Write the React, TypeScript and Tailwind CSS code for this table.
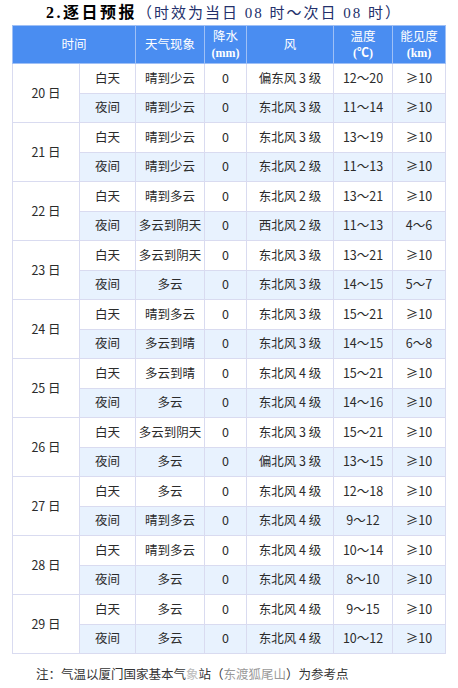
import React from "react";

type Half = { label: string; weather: string; rain: string; wind: string; temp: string; vis: string };
type Day = { day: string; rows: [Half, Half] };

const h = (label: string, weather: string, wind: string, temp: string, vis = "≥10"): Half => ({
  label,
  weather,
  rain: "0",
  wind,
  temp,
  vis,
});

const days: Day[] = [
  { day: "20 日", rows: [h("白天", "晴到少云", "偏东风 3 级", "12～20"), h("夜间", "晴到少云", "东北风 3 级", "11～14")] },
  { day: "21 日", rows: [h("白天", "晴到少云", "东北风 3 级", "13～19"), h("夜间", "晴到少云", "东北风 2 级", "11～13")] },
  { day: "22 日", rows: [h("白天", "晴到多云", "东北风 2 级", "13～21"), h("夜间", "多云到阴天", "西北风 2 级", "11～13", "4～6")] },
  { day: "23 日", rows: [h("白天", "多云到阴天", "东北风 3 级", "13～21"), h("夜间", "多云", "东北风 3 级", "14～15", "5～7")] },
  { day: "24 日", rows: [h("白天", "晴到多云", "东北风 3 级", "15～21"), h("夜间", "多云到晴", "东北风 3 级", "14～15", "6～8")] },
  { day: "25 日", rows: [h("白天", "多云到晴", "东北风 4 级", "15～21"), h("夜间", "多云", "东北风 4 级", "14～16")] },
  { day: "26 日", rows: [h("白天", "多云到阴天", "东北风 3 级", "15～21"), h("夜间", "多云", "偏北风 3 级", "13～15")] },
  { day: "27 日", rows: [h("白天", "多云", "东北风 4 级", "12～18"), h("夜间", "晴到多云", "东北风 4 级", "9～12")] },
  { day: "28 日", rows: [h("白天", "晴到多云", "东北风 4 级", "10～14"), h("夜间", "多云", "东北风 4 级", "8～10")] },
  { day: "29 日", rows: [h("白天", "多云", "东北风 4 级", "9～15"), h("夜间", "多云", "东北风 4 级", "10～12")] },
];

const sans = "font-['Noto_Sans_CJK_SC',sans-serif]";
const serif = "font-['Liberation_Serif','Noto_Sans_CJK_SC',serif]";

export default function App() {
  return (
    <div className={`w-[458px] h-[688px] bg-white ${sans} text-[#2b2b2b]`}>
      {/* Title */}
      <div className="h-[25px] flex items-center pl-[46px] pt-[1px]">
        <span className={`${serif} text-[16px] font-bold text-black leading-none tracking-[2.5px]`}>2.逐日预报</span>
        <span className={`${serif} text-[15px] text-[#23306b] leading-none tracking-[2px]`}>
          （时效为当日 08 时～次日 08 时）
        </span>
      </div>

      {/* Table */}
      <div className="pl-[12px]">
        <table className="border-collapse table-fixed w-[433px] text-[12.5px] text-center">
          <colgroup>
            <col className="w-[67px]" />
            <col className="w-[56px]" />
            <col className="w-[69px]" />
            <col className="w-[42px]" />
            <col className="w-[87px]" />
            <col className="w-[59px]" />
            <col className="w-[53px]" />
          </colgroup>
          <thead>
            <tr className="h-[38px] bg-[#4a8df1] text-white">
              <th colSpan={2} className="font-normal border border-[#9fc0f6]">时间</th>
              <th className="font-normal border border-[#9fc0f6]">天气现象</th>
              <th className="font-normal border border-[#9fc0f6] leading-[16px]">
                降水
                <br />
                <span className={`${serif} font-bold text-[12px]`}>(mm)</span>
              </th>
              <th className="font-normal border border-[#9fc0f6]">风</th>
              <th className="font-normal border border-[#9fc0f6] leading-[16px]">
                温度
                <br />
                <span className={`${serif} font-bold text-[12px]`}>(℃)</span>
              </th>
              <th className="font-normal border border-[#9fc0f6] leading-[16px]">
                能见度
                <br />
                <span className={`${serif} font-bold text-[12px]`}>(km)</span>
              </th>
            </tr>
          </thead>
          <tbody>
            {days.map((d) =>
              d.rows.map((r, i) => (
                <tr key={d.day + i} className={i === 1 ? "h-[29.5px] bg-[#e8f2fe]" : "h-[29.5px] bg-white"}>
                  {i === 0 && (
                    <td rowSpan={2} className="bg-white border border-[#d9dbf0]">
                      {d.day}
                    </td>
                  )}
                  <td className="border border-[#d9dbf0]">{r.label}</td>
                  <td className="border border-[#d9dbf0]">{r.weather}</td>
                  <td className="border border-[#d9dbf0]">{r.rain}</td>
                  <td className="border border-[#d9dbf0]">{r.wind}</td>
                  <td className="border border-[#d9dbf0]">{r.temp}</td>
                  <td className="border border-[#d9dbf0]">{r.vis}</td>
                </tr>
              ))
            )}
          </tbody>
        </table>
      </div>

      {/* Note */}
      <div className="pl-[36px] pt-[14px] text-[12.5px] text-[#333] leading-none">
        注：气温以厦门国家基本气<span className="text-[#bbb]">象</span>站（
        <span className="text-[#999]">东渡狐尾山</span>）为参考点
      </div>
    </div>
  );
}
